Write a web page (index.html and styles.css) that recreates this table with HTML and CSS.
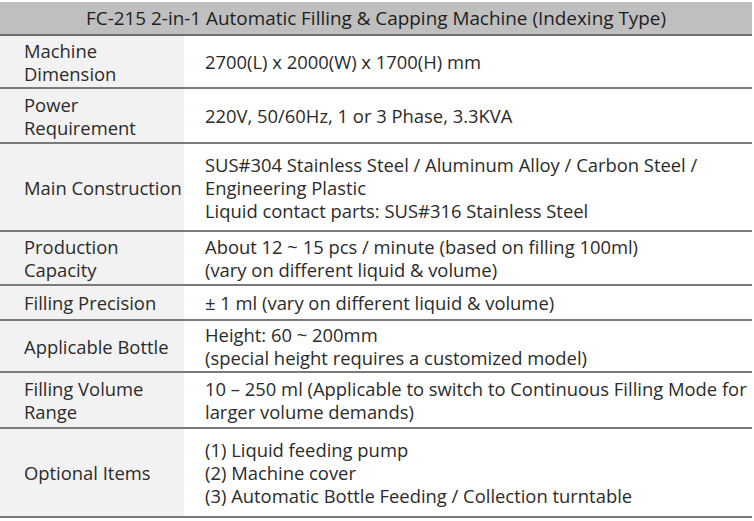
FILE: index.html
```html
<!DOCTYPE html>
<html>
<head>
<meta charset="utf-8">
<link rel="stylesheet" href="styles.css">
</head>
<body>
<div class="spec">
  <div class="head">FC-215 2-in-1 Automatic Filling &amp; Capping Machine (Indexing Type)</div>
  <div class="row r1"><div class="k">Machine<br>Dimension</div><div class="v">2700(L) x 2000(W) x 1700(H) mm</div></div>
  <div class="row r2"><div class="k">Power<br>Requirement</div><div class="v">220V, 50/60Hz, 1 or 3 Phase, 3.3KVA</div></div>
  <div class="row r3"><div class="k">Main Construction</div><div class="v">SUS#304 Stainless Steel / Aluminum Alloy / Carbon Steel /<br>Engineering Plastic<br>Liquid contact parts: SUS#316 Stainless Steel</div></div>
  <div class="row r4"><div class="k">Production<br>Capacity</div><div class="v">About 12 ~ 15 pcs / minute (based on filling 100ml)<br>(vary on different liquid &amp; volume)</div></div>
  <div class="row r5"><div class="k">Filling Precision</div><div class="v">± 1 ml (vary on different liquid &amp; volume)</div></div>
  <div class="row r6"><div class="k">Applicable Bottle</div><div class="v">Height: 60 ~ 200mm<br>(special height requires a customized model)</div></div>
  <div class="row r7"><div class="k">Filling Volume<br>Range</div><div class="v">10 – 250 ml (Applicable to switch to Continuous Filling Mode for<br>larger volume demands)</div></div>
  <div class="row r8"><div class="k">Optional Items</div><div class="v">(1) Liquid feeding pump<br>(2) Machine cover<br>(3) Automatic Bottle Feeding / Collection turntable</div></div>
</div>
</body>
</html>
```
FILE: styles.css
```css
html, body { margin: 0; padding: 0; background: #fff; }
body { font-family: "Open Sans", "Noto Sans", sans-serif; font-size: 18.4px; color: #2b2b2b; }
.spec { width: 752px; margin-top: 2px; }
.head {
  background: #bfbfbf;
  height: 32px;
  line-height: 32px;
  font-size: 18.9px;
  text-align: center;
  border-bottom: 2px solid #6f6f6f;
  color: #1e1e1e;
  white-space: nowrap;
}
.row {
  display: flex;
  border-bottom: 2px solid #7a7a7a;
}
.k {
  width: 160px;
  flex: none;
  background: #f2f2f2;
  padding-left: 24px;
  display: flex;
  align-items: center;
  line-height: 23px;
  white-space: nowrap;
}
.v {
  flex: 1;
  padding-left: 21px;
  display: flex;
  align-items: center;
  line-height: 23px;
  white-space: nowrap;
}
.r1 { height: 51px; }
.r2 { height: 53px; }
.r3 { height: 86px; }
.r4 { height: 52px; }
.r5 { height: 33px; }
.r6 { height: 50px; }
.r7 { height: 54px; }
.r8 { height: 87px; }
```
